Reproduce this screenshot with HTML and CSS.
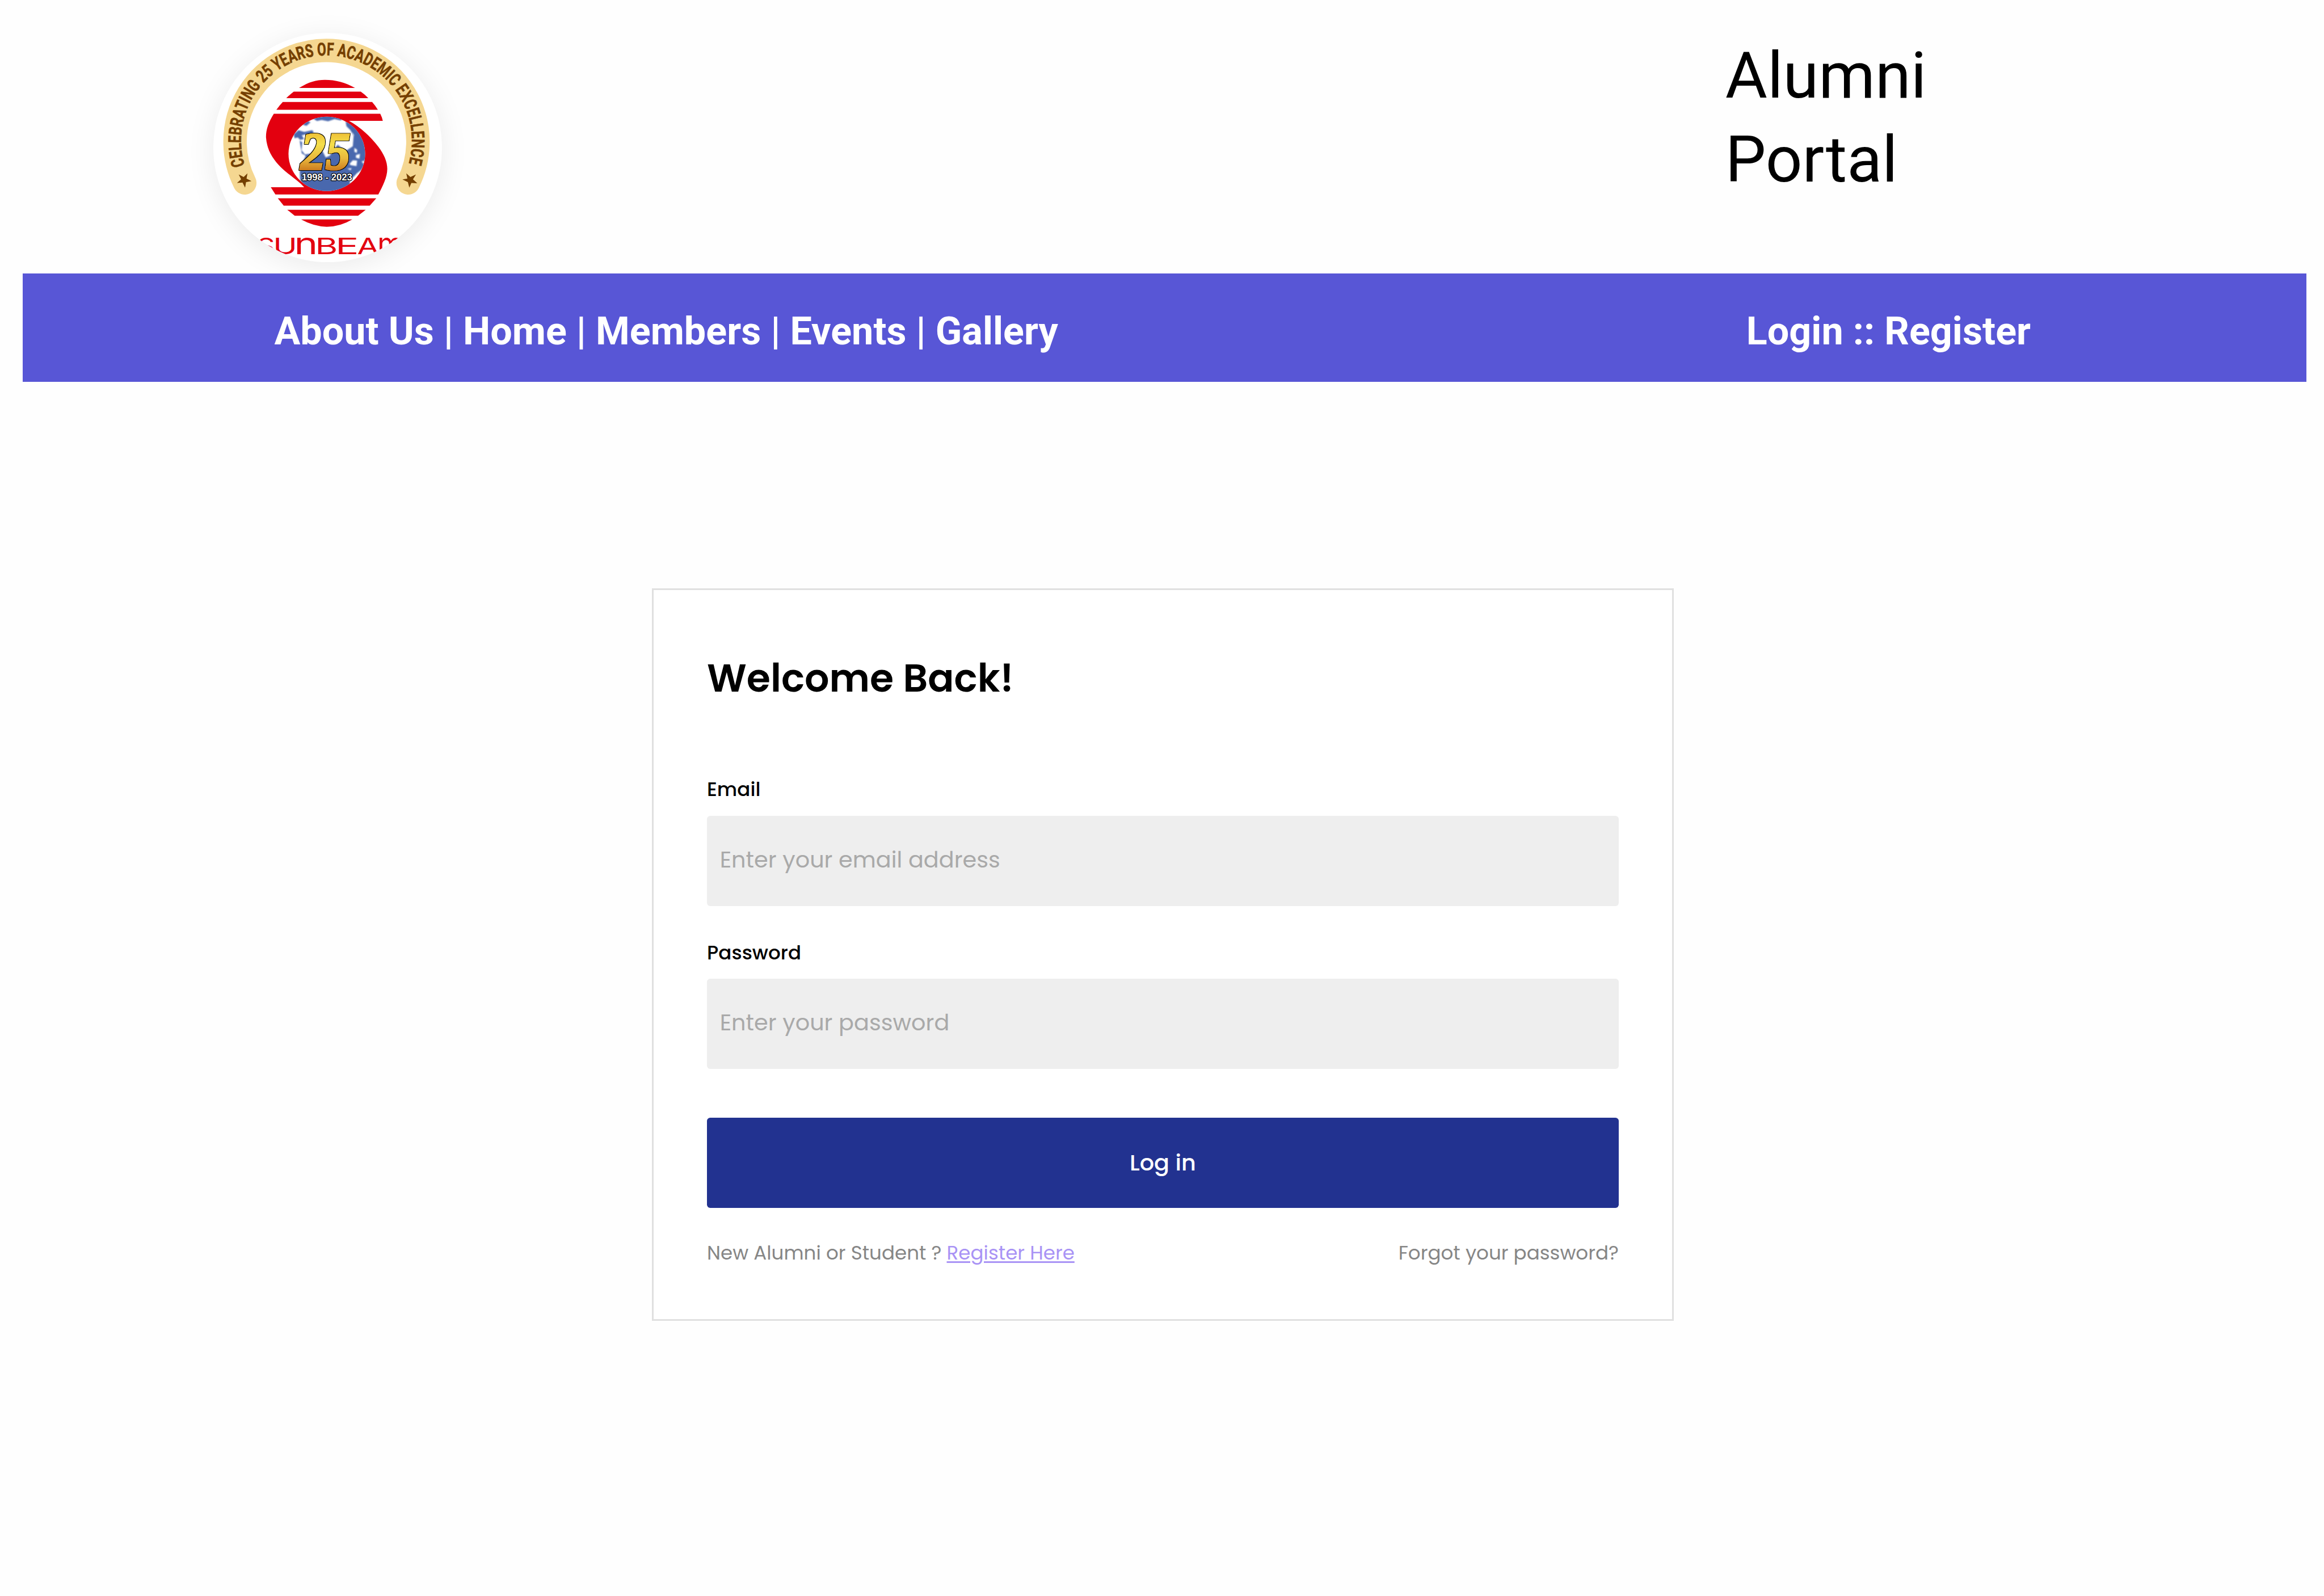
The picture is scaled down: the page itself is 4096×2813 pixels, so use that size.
FILE: index.html
```html
<!DOCTYPE html>
<html lang="en">
<head>
<meta charset="utf-8">
<title>Alumni Portal</title>
<link rel="stylesheet" href="styles.css">
</head>
<body>
<header class="header">
  <svg class="logo" viewBox="71 80 1436 1436" role="img" aria-label="Sunbeam">
    <defs>
      <path id="ring" d="M268 911 A535 535 0 1 1 1292 911"/>
      <linearGradient id="gold" x1="0" y1="0" x2="0" y2="1">
        <stop offset="0.15" stop-color="#eebb33"/>
        <stop offset="0.38" stop-color="#f4df4c"/>
        <stop offset="0.62" stop-color="#e9b83c"/>
        <stop offset="0.85" stop-color="#c9741c"/>
      </linearGradient>
      <clipPath id="globe"><ellipse cx="782" cy="838" rx="240" ry="233"/></clipPath>
      <filter id="soft"><feGaussianBlur stdDeviation="4"/></filter>
      <filter id="outline">
        <feMorphology in="SourceAlpha" operator="dilate" radius="4" result="edge"/>
        <feMerge><feMergeNode in="edge"/><feMergeNode in="SourceGraphic"/></feMerge>
      </filter>
    </defs>

    <path class="band" d="M268 1020 A573 573 0 1 1 1292 1020"/>
    <text class="motto"><textPath href="#ring" textLength="1982" lengthAdjust="spacingAndGlyphs">CELEBRATING 25 YEARS OF ACADEMIC EXCELLENCE</textPath></text>
    <path class="star" d="M285 960 L279 993 L310 1009 L276 1015 L270 1050 L254 1018 L219 1020 L245 997 L230 967 L261 983 Z"/>
    <path class="star" d="M1280 960 L1287 993 L1256 998 L1290 1015 L1299 1050 L1312 1020 L1349 1022 L1322 997 L1341 967 L1306 983 Z"/>

    <g class="mark">
      <path d="M608 425 C670 387 715 374 770 374 C835 374 900 390 959 425 Z"/>
      <path d="M575 448 H995 Q1020 465 1042 489 H528 Q552 465 575 448 Z"/>
      <path d="M506 513 H1066 Q1086 535 1102 562 H466 Q485 535 506 513 Z"/>
      <path d="M450 587 H1117 Q1128 608 1133 631 H921 C1000 675 1060 735 1104 792 C1140 840 1161 885 1161 932 C1161 985 1132 1040 1105 1092 H460 L431 1047 H640 C585 985 500 950 440 855 C415 815 404 775 401 733 C401 685 417 640 450 587 Z"/>
      <path d="M475 1116 H1092 L1051 1163 H512 Z"/>
      <path d="M534 1188 H1026 L978 1226 H581 Z"/>
      <path d="M621 1249 H942 Q865 1295 782 1295 Q700 1293 621 1249 Z"/>
    </g>

    <g clip-path="url(#globe)">
      <rect class="ice" x="540" y="600" width="490" height="480"/>
      <g class="sea" filter="url(#soft)">
        <path d="M690 612 L720 632 L750 626 L790 634 L830 620 L870 628 L900 600 L780 590 Z"/>
        <path d="M630 655 L660 630 L680 640 L655 662 Z"/>
        <path d="M575 715 L605 690 L640 700 L690 690 L700 700 L672 735 L655 715 L625 722 L640 745 L615 750 L600 735 L580 740 Z"/>
        <path d="M612 755 L628 765 L624 815 L645 842 L690 835 L720 785 L745 800 L775 860 L800 850 L850 780 L900 820 L945 790 L950 725 L930 690 L905 665 L900 635 L960 650 L1030 760 L1030 900 L1010 920 L990 960 L950 990 L920 1080 L660 1080 L615 1000 L612 930 L650 850 L625 835 Z"/>
      </g>
      <g class="ice" filter="url(#soft)">
        <path d="M955 800 L972 812 L970 832 L955 825 Z"/>
        <path d="M965 845 L990 838 L986 868 L964 862 Z"/>
        <path d="M925 900 L945 878 L972 880 L968 915 L930 908 Z"/>
        <path d="M1000 885 L1018 880 L1015 905 Z"/>
        <path d="M910 930 L938 928 L930 940 Z"/>
        <path d="M940 700 L955 725 L945 720 Z"/>
        <path d="M925 1010 L970 960 L1010 930 L990 1000 L930 1040 Z"/>
      </g>
    </g>
    <text class="jubilee" x="619" y="935" textLength="310" lengthAdjust="spacingAndGlyphs">25</text>
    <text class="years" x="625" y="1006" textLength="316" lengthAdjust="spacingAndGlyphs">1998 - 2023</text>

    <g class="name">
      <text x="345" y="1466" textLength="112" lengthAdjust="spacingAndGlyphs">S</text>
      <text x="446" y="1466" textLength="150" lengthAdjust="spacingAndGlyphs">U</text>
      <text class="round" x="578" y="1465" textLength="148" lengthAdjust="spacingAndGlyphs">n</text>
      <text x="709" y="1466" textLength="141" lengthAdjust="spacingAndGlyphs">B</text>
      <text x="836" y="1466" textLength="146" lengthAdjust="spacingAndGlyphs">E</text>
      <text x="972" y="1466" textLength="136" lengthAdjust="spacingAndGlyphs">A</text>
      <text class="round" x="1099" y="1465" textLength="164" lengthAdjust="spacingAndGlyphs">m</text>
    </g>
  </svg>
  <h1 class="brand">Alumni<br>Portal</h1>
</header>

<nav class="nav">
  <div class="nav-main">About Us | Home | Members | Events | Gallery</div>
  <div class="nav-user">Login :: Register</div>
</nav>

<main class="card">
  <h2 class="title">Welcome Back!</h2>
  <form class="form">
    <label class="label label-email" for="email">Email</label>
    <input class="field" id="email" type="email" placeholder="Enter your email address">
    <label class="label label-password" for="password">Password</label>
    <input class="field" id="password" type="password" placeholder="Enter your password">
    <button class="submit" type="button">Log in</button>
  </form>
  <div class="links">
    <p class="join">New Alumni or Student ? <a class="register" href="#">Register Here</a></p>
    <p class="forgot">Forgot your password?</p>
  </div>
</main>
</body>
</html>
```

FILE: styles.css
```css
* { box-sizing: border-box; }

body {
  margin: 0;
  height: 2813px;
  overflow: hidden;
  background: #fefefe;
  color: #000;
  font-family: "Roboto", sans-serif;
}

h1, h2, p { margin: 0; }

/* Header */
.header {
  display: flex;
  align-items: flex-start;
  height: 482.1px;
  padding-left: 375.5px;
}
.logo {
  flex: none;
  width: 403.9px;
  height: 403.9px;
  margin-top: 58.3px;
  border-radius: 50%;
  background: #fff;
  box-shadow: 0 8px 50px rgba(0, 0, 0, 0.08);
}
.brand {
  margin: 59.6px 0 0 2261.3px;
  font-size: 113.78px;
  font-weight: 400;
  line-height: 147.9px;
}

/* Logo artwork */
.band { fill: none; stroke: #f5d791; stroke-width: 147; stroke-linecap: round; }
.motto { font: 700 112px "Roboto", sans-serif; fill: #743f00; stroke: #743f00; stroke-width: 2; }
.star { fill: #743f00; }
.mark { fill: #e3000f; }
.ice { fill: #fff; }
.sea { fill: #4a68ae; }
.jubilee {
  font: italic 700 332px "Liberation Serif", serif;
  fill: url(#gold);
  stroke: url(#gold);
  stroke-width: 11;
  filter: url(#outline);
}
.years {
  font: 700 58px "Liberation Sans", sans-serif;
  fill: #fff;
  stroke: #000;
  stroke-width: 8;
  paint-order: stroke;
  stroke-linejoin: round;
}
.name { font: 400 142px "Inter", sans-serif; fill: #e3000f; }
.round { font-size: 190px; font-weight: 400; }

/* Navigation bar */
.nav {
  position: relative;
  display: flex;
  width: 4025px;
  height: 190.6px;
  margin-left: 39.8px;
  padding: 61.9px 0 0 443.7px;
  background: #5856d6;
  color: #fff;
  font-size: 68.27px;
  font-weight: 700;
  line-height: 80px;
  letter-spacing: 0.03px;
}
.nav-main { width: 2594.3px; }

/* Sign-in card */
.card {
  width: 1800.5px;
  height: 1291.4px;
  margin: 364.1px 0 0 1149.2px;
  padding: 103.9px 93.8px 0;
  border: 3px solid #e0e0e0;
  background: #fff;
  font-family: "Poppins", "Inter", sans-serif;
}
.title {
  font-size: 68.27px;
  font-weight: 600;
  line-height: 102.4px;
}
.form { display: flex; flex-direction: column; }
.label {
  font-size: 34.13px;
  font-weight: 500;
  line-height: 51.2px;
}
.label-email { margin-top: 120.4px; }
.label-password { margin-top: 56.6px; }
.field {
  width: 100%;
  height: 159.3px;
  margin-top: 20.2px;
  padding: 0 22.7px 5px;
  border: 0;
  border-radius: 5.7px;
  background: #eee;
  font-family: inherit;
  font-size: 39.82px;
}
.field::placeholder { color: #a9a9a9; opacity: 1; }
.submit {
  height: 159.3px;
  margin-top: 85.3px;
  padding: 0;
  border: 0;
  border-radius: 5.7px;
  background: #223290;
  color: #fff;
  font-family: inherit;
  font-size: 39.82px;
  font-weight: 500;
}
.links {
  display: flex;
  justify-content: space-between;
  margin-top: 53.5px;
  color: #868686;
  font-size: 34.13px;
  line-height: 51.2px;
}
.register {
  color: #a993f5;
  text-decoration-thickness: 3px;
  text-underline-offset: 3px;
}
```
